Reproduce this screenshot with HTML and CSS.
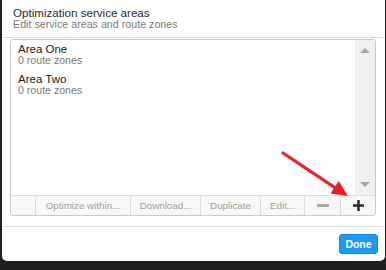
FILE: index.html
```html
<!DOCTYPE html>
<html lang="en">
<head>
  <meta charset="UTF-8">
  <meta name="viewport" content="width=device-width, initial-scale=1.0">
  <title>Optimization service areas</title>
  <link rel="stylesheet" href="styles.css">
</head>
<body>
  <div class="dialog">
    <div class="dialog-header">
      <div class="dialog-title">Optimization service areas</div>
      <div class="dialog-subtitle">Edit service areas and route zones</div>
    </div>

    <div class="dialog-body">
      <div class="area-list">
        <div class="area-list-main">
          <ul class="areas">
            <li class="area">
              <div class="area-name">Area One</div>
              <div class="area-meta">0 route zones</div>
            </li>
            <li class="area">
              <div class="area-name">Area Two</div>
              <div class="area-meta">0 route zones</div>
            </li>
          </ul>
          <div class="scrollbar">
            <span class="scroll-arrow up"></span>
            <span class="scroll-arrow down"></span>
          </div>
        </div>

        <div class="toolbar">
          <span class="tool tool-blank"></span>
          <span class="tool tool-optimize">Optimize within...</span>
          <span class="tool tool-download">Download...</span>
          <span class="tool tool-duplicate">Duplicate</span>
          <span class="tool tool-edit">Edit...</span>
          <span class="tool tool-remove">
            <svg width="12" height="3" viewBox="0 0 12 3"><rect width="12" height="3" fill="#a9a9a9"/></svg>
          </span>
          <span class="tool tool-add">
            <svg width="11" height="11" viewBox="0 0 11 11">
              <rect x="0" y="4.25" width="11" height="2.5" fill="#2b2b2b"/>
              <rect x="4.25" y="0" width="2.5" height="11" fill="#2b2b2b"/>
            </svg>
          </span>
        </div>
      </div>
    </div>

    <div class="dialog-footer">
      <button class="button-primary">Done</button>
    </div>
  </div>

  <!-- annotation pointing at the add button -->
  <svg class="annotation" width="386" height="270" viewBox="0 0 386 270">
    <line x1="283" y1="153" x2="337" y2="189" stroke="#ee1c24" stroke-width="3.2" stroke-linecap="round"/>
    <polygon points="348,196 330.5,193.5 338.7,180.9" fill="#ee1c24"/>
  </svg>
</body>
</html>
```

FILE: styles.css
```css
body {
  margin: 0;
  height: 270px;
  overflow: hidden;
  background-color: #1f1f1f;
  font-family: "Liberation Sans", Arial, sans-serif;
  position: relative;
}

.dialog {
  margin-left: 2px;
  width: 383px;
  height: 261px;
  background-color: #ffffff;
  border-radius: 0 0 5px 5px;
  display: flex;
  flex-direction: column;
  box-sizing: border-box;
}

.dialog-header {
  padding: 7px 11px 8px;
  border-bottom: 1px solid #dcdcdc;
}

.dialog-title {
  font-size: 11.6px;
  line-height: 12px;
  color: #2a2a2a;
}

.dialog-subtitle {
  font-size: 10.7px;
  line-height: 10px;
  color: #7a7a7a;
}

.dialog-body {
  padding: 1px 9px 10px 8px;
}

.area-list {
  height: 177px;
  box-sizing: border-box;
  border: 1px solid #c9c9c9;
  border-radius: 3px;
  display: flex;
  flex-direction: column;
}

.area-list-main {
  flex: 1;
  display: flex;
  min-height: 0;
}

.areas {
  flex: 1;
  list-style: none;
  margin: 0;
  padding: 0;
}

.area {
  padding: 3px 7px 4px;
}

.area-name {
  font-size: 11.5px;
  line-height: 12px;
  color: #222222;
}

.area-meta {
  font-size: 10.6px;
  line-height: 11px;
  color: #7a7a7a;
}

.scrollbar {
  width: 20px;
  background-color: #f0f0f0;
  display: flex;
  flex-direction: column;
  justify-content: space-between;
  align-items: center;
  padding: 8px 0;
  box-sizing: border-box;
}

.scroll-arrow {
  width: 0;
  height: 0;
  border-left: 5px solid transparent;
  border-right: 5px solid transparent;
}

.scroll-arrow.up {
  border-bottom: 5px solid #a3a3a3;
}

.scroll-arrow.down {
  border-top: 5px solid #a3a3a3;
}

.toolbar {
  height: 20px;
  box-sizing: border-box;
  border-top: 1px solid #dcdcdc;
  background-color: #f8f8f8;
  border-radius: 0 0 3px 3px;
  display: flex;
}

.tool {
  display: flex;
  align-items: center;
  justify-content: center;
  box-sizing: border-box;
  border-left: 1px solid #dcdcdc;
  font-size: 9.8px;
  color: #a0a0a0;
  white-space: nowrap;
}

.tool-blank { width: 24px; border-left: none; }
.tool-optimize { width: 95px; }
.tool-download { width: 70px; }
.tool-duplicate { width: 60px; }
.tool-edit { width: 44px; }
.tool-remove { width: 36px; }
.tool-add { width: 35px; }

.dialog-footer {
  border-top: 1px solid #dcdcdc;
  padding: 7px 7px;
  display: flex;
  justify-content: flex-end;
}

.button-primary {
  width: 39px;
  height: 20px;
  padding: 0;
  border: 1px solid #0f8de6;
  border-radius: 3px;
  background-color: #1a9cf5;
  color: #ffffff;
  font-family: "Liberation Sans", Arial, sans-serif;
  font-size: 10.5px;
  font-weight: bold;
}

.annotation {
  position: absolute;
  left: 0;
  top: 0;
  pointer-events: none;
}
```
